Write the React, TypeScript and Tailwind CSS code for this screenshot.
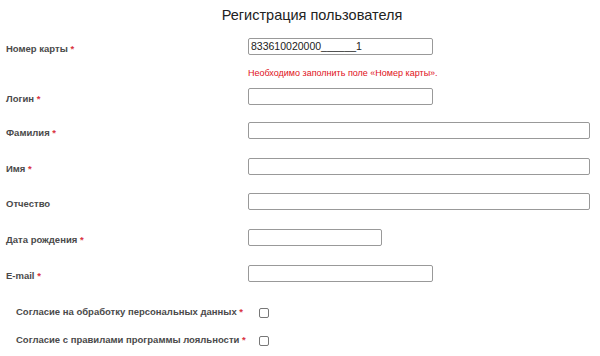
import React from 'react';

interface Field {
  label: string;
  required: boolean;
  width: string;
  mt: string;
  value?: string;
}

const fields: Field[] = [
  { label: 'Логин', required: true, width: 'w-[185px]', mt: 'mt-[9px]' },
  { label: 'Фамилия', required: true, width: 'w-[342px]', mt: 'mt-[17px]' },
  { label: 'Имя', required: true, width: 'w-[342px]', mt: 'mt-[19px]' },
  { label: 'Отчество', required: false, width: 'w-[342px]', mt: 'mt-[18px]' },
  { label: 'Дата рождения', required: true, width: 'w-[134px]', mt: 'mt-[19px]' },
  { label: 'E-mail', required: true, width: 'w-[185px]', mt: 'mt-[19px]' },
];

function Star() {
  return <span className="text-[#d9343f]"> *</span>;
}

function Input({ width, value }: { width: string; value?: string }) {
  return (
    <div
      className={`${width} h-[17px] border border-[#999] rounded-[2px] bg-white pl-[2px] text-[10.5px] leading-[15px] text-[#222]`}
    >
      {value}
    </div>
  );
}

// labels sit a little below the input's centre in the original
function Label({ children }: { children: React.ReactNode }) {
  return (
    <div className="w-[248px] shrink-0 pl-[6px] pt-[4px] leading-[11px] text-[9.5px] font-bold text-[#4a4a4a] whitespace-nowrap">
      {children}
    </div>
  );
}

function Row({ field }: { field: Field }) {
  return (
    <div className={`flex items-center h-[17px] ${field.mt}`}>
      <Label>
        {field.label}
        {field.required && <Star />}
      </Label>
      <Input width={field.width} />
    </div>
  );
}

function Consent({ label, mt }: { label: string; mt: string }) {
  return (
    <div className={`flex items-center h-[17px] ${mt}`}>
      <div className="w-[259px] shrink-0 pl-[16px] text-[9.5px] font-bold text-[#4a4a4a] whitespace-nowrap">
        {label}
        <Star />
      </div>
      <span className="block w-[10px] h-[10px] border border-[#777] rounded-[2px] bg-white" />
    </div>
  );
}

export default function App() {
  return (
    <div className="w-[600px] h-[356px] bg-white overflow-hidden font-['Liberation_Sans',Arial,sans-serif]">
      <div className="h-[30px] leading-[30px] text-center text-[14.5px] text-[#222] pl-[24px]">
        Регистрация пользователя
      </div>

      <div className="flex items-center h-[17px] mt-[8px]">
        <Label>
          Номер карты
          <Star />
        </Label>
        <Input width="w-[185px]" value="833610020000______1" />
      </div>
      <div className="mt-[12px] h-[12px] leading-[12px] pl-[248px] text-[9px] text-[#e0101a]">
        Необходимо заполнить поле «Номер карты».
      </div>

      {fields.map((f) => (
        <Row key={f.label} field={f} />
      ))}

      <Consent label="Согласие на обработку персональных данных" mt="mt-[22px]" />
      <Consent label="Согласие с правилами программы лояльности" mt="mt-[11px]" />
    </div>
  );
}
